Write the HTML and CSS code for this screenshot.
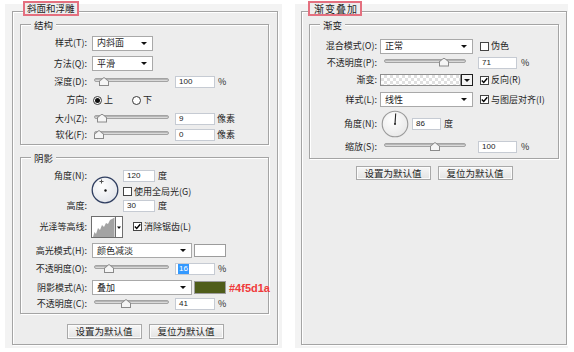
FILE: index.html
```html
<!DOCTYPE html>
<html lang="zh-CN">
<head>
<meta charset="utf-8">
<title>图层样式</title>
<link rel="stylesheet" href="styles.css">
</head>
<body>
<div class="page">
  <section class="panel panel-left">
    <div class="outer">
      <div class="tab">斜面和浮雕</div>

      <div class="grp grp-struct">
        <div class="grp-title">结构</div>
        <div class="row h22">
          <span class="lbl">样式(T):</span>
          <div class="select s61"><span>内斜面</span><i class="arrow"></i></div>
        </div>
        <div class="row h19">
          <span class="lbl">方法(Q):</span>
          <div class="select s61"><span>平滑</span><i class="arrow"></i></div>
        </div>
        <div class="row h18">
          <span class="lbl">深度(D):</span>
          <div class="slider"><span class="track"></span><span class="thumb" style="left:5px"></span></div>
          <span class="num w40">100</span><span class="unit">%</span>
        </div>
        <div class="row h18">
          <span class="lbl">方向:</span>
          <span class="radio on"></span><span class="rtext">上</span>
          <span class="radio r2"></span><span class="rtext">下</span>
        </div>
        <div class="row h19">
          <span class="lbl">大小(Z):</span>
          <div class="slider"><span class="track"></span><span class="thumb" style="left:3px"></span></div>
          <span class="num w40">9</span><span class="unit u2">像素</span>
        </div>
        <div class="row h14">
          <span class="lbl">软化(F):</span>
          <div class="slider"><span class="track"></span><span class="thumb" style="left:0px"></span></div>
          <span class="num w40">0</span><span class="unit u2">像素</span>
        </div>
      </div>

      <div class="grp grp-shadow">
        <div class="grp-title">阴影</div>
        <div class="angle">
          <span class="lbl ga1">角度(N):</span>
          <svg class="dial" width="28" height="28" viewBox="0 0 28 28">
            <defs><radialGradient id="dgl" cx="40%" cy="35%" r="75%"><stop offset="0" stop-color="#ffffff"/><stop offset="1" stop-color="#dfe2e8"/></radialGradient></defs>
            <circle cx="14" cy="14" r="12.8" fill="url(#dgl)" stroke="#2f3e60" stroke-width="1.3"/>
            <path d="M10.5 3.5v4M8.5 5.5h4" stroke="#555" stroke-width="1"/>
            <circle cx="14.5" cy="14.5" r="1.2" fill="#111"/>
          </svg>
          <div class="fld ga1"><span class="num w32">120</span><span class="unit">度</span></div>
          <div class="fld ga2"><span class="cb"></span><span class="cbt">使用全局光(G)</span></div>
          <span class="lbl ga3">高度:</span>
          <div class="fld ga3"><span class="num w32">30</span><span class="unit">度</span></div>
        </div>
        <div class="row h29">
          <span class="lbl">光泽等高线:</span>
          <svg class="contour" width="32" height="22" viewBox="0 0 32 22">
            <rect x="0.5" y="0.5" width="31" height="21" fill="#fff" stroke="#6e6e6e"/>
            <path d="M2 21 L3.5 16 L5 18 L7 12 L9 14 L11 9 L13 11 L15 7 L17 8 L19 4 L21 3 L23.5 1.5 L23.5 21 Z" fill="#a3a3a3"/>
            <line x1="24.5" y1="0.5" x2="24.5" y2="21.5" stroke="#6e6e6e"/>
            <path d="M26 10.5h4l-2 2.5z" fill="#111"/>
          </svg>
          <span class="cb cb-gap on"><svg width="7" height="7" viewBox="0 0 7 7"><path d="M0.8 3.6 L2.7 5.5 L6.3 1.2" fill="none" stroke="#000" stroke-width="1.4"/></svg></span><span class="cbt">消除锯齿(L)</span>
        </div>
        <div class="row h19">
          <span class="lbl">高光模式(H):</span>
          <div class="select s100"><span>颜色减淡</span><i class="arrow"></i></div>
          <span class="sw sw-white"></span>
        </div>
        <div class="row h18">
          <span class="lbl">不透明度(O):</span>
          <div class="slider"><span class="track"></span><span class="thumb" style="left:10px"></span></div>
          <span class="num w40"><span class="selected">16</span></span><span class="unit">%</span>
        </div>
        <div class="row h19">
          <span class="lbl">阴影模式(A):</span>
          <div class="select s100"><span>叠加</span><i class="arrow"></i></div>
          <span class="sw sw-olive"></span>
          <span class="hex">#4f5d1a</span>
        </div>
        <div class="row h14">
          <span class="lbl">不透明度(C):</span>
          <div class="slider"><span class="track"></span><span class="thumb" style="left:27px"></span></div>
          <span class="num w40">41</span><span class="unit">%</span>
        </div>
      </div>

      <div class="btns">
        <div class="btn">设置为默认值</div>
        <div class="btn">复位为默认值</div>
      </div>
    </div>
  </section>

  <section class="panel panel-right">
    <div class="outer">
      <div class="tab tab-right">渐变叠加</div>

      <div class="grp grp-grad">
        <div class="grp-title">渐变</div>
        <div class="row h20">
          <span class="lbl lr">混合模式(O):</span>
          <div class="select s93"><span>正常</span><i class="arrow"></i></div>
          <span class="cb cb-r"></span><span class="cbt">伪色</span>
        </div>
        <div class="row h13">
          <span class="lbl lr">不透明度(P):</span>
          <div class="slider sl-r"><span class="track"></span><span class="thumb" style="left:55px"></span></div>
          <span class="num w39">71</span><span class="unit u4">%</span>
        </div>
        <div class="row h22">
          <span class="lbl lr">渐变:</span>
          <div class="grad"><span class="grad-sw"></span><span class="grad-btn"><i class="arrow"></i></span></div>
          <span class="cb cb-r on"><svg width="7" height="7" viewBox="0 0 7 7"><path d="M0.8 3.6 L2.7 5.5 L6.3 1.2" fill="none" stroke="#000" stroke-width="1.4"/></svg></span><span class="cbt">反向(R)</span>
        </div>
        <div class="row h17">
          <span class="lbl lr">样式(L):</span>
          <div class="select s93"><span>线性</span><i class="arrow"></i></div>
          <span class="cb cb-r on"><svg width="7" height="7" viewBox="0 0 7 7"><path d="M0.8 3.6 L2.7 5.5 L6.3 1.2" fill="none" stroke="#000" stroke-width="1.4"/></svg></span><span class="cbt">与图层对齐(I)</span>
        </div>
        <div class="row h31">
          <span class="lbl lr">角度(N):</span>
          <svg class="dial dial-r" width="28" height="28" viewBox="0 0 28 28">
            <defs><radialGradient id="dgr" cx="40%" cy="35%" r="75%"><stop offset="0" stop-color="#ffffff"/><stop offset="1" stop-color="#e6e6e6"/></radialGradient></defs>
            <circle cx="14" cy="14" r="12.8" fill="url(#dgr)" stroke="#9a9a9a" stroke-width="1.1"/>
            <line x1="14" y1="14" x2="14.7" y2="3.5" stroke="#222" stroke-width="1.1"/>
            <circle cx="14" cy="14" r="1" fill="#222"/>
          </svg>
          <span class="num w29">86</span><span class="unit">度</span>
        </div>
        <div class="row h16">
          <span class="lbl lr">缩放(S):</span>
          <div class="slider sl-r"><span class="track"></span><span class="thumb" style="left:46px"></span></div>
          <span class="num w39">100</span><span class="unit u4">%</span>
        </div>
      </div>

      <div class="btns btns-r">
        <div class="btn">设置为默认值</div>
        <div class="btn">复位为默认值</div>
      </div>
    </div>
  </section>
</div>
</body>
</html>
```

FILE: styles.css
```css
* { box-sizing: border-box; margin: 0; padding: 0; }
html, body { background: #fff; }
body {
  font-family: "Noto Sans CJK SC", "Noto Sans", sans-serif;
  font-size: 9px;
  color: #1f1f1f;
}

.page { display: flex; gap: 13px; padding: 4px 0 0 5px; }

.panel { height: 344px; background: #f3f3f3; padding-top: 7px; padding-bottom: 3px; }
.panel-left { width: 277px; padding-left: 7px; padding-right: 4px; }
.panel-right { width: 273px; padding-left: 6px; padding-right: 1px; }

.outer {
  height: 100%;
  border: 1px solid #a4a4a4;
  box-shadow: inset 1px 1px 0 #fff, 1px 1px 0 #fff;
  background: #ededed;
  display: flex;
  flex-direction: column;
}

.tab {
  align-self: flex-start;
  margin: -11px 0 0 10px;
  height: 15px;
  border: 2px solid #e4707f;
  background: #ededed;
  padding: 0 2px;
  line-height: 11px;
  font-size: 9.5px;
  white-space: nowrap;
}
.tab-right { margin-left: 6px; font-size: 10px; letter-spacing: 1px; padding: 0 2px 0 4px; }

.grp {
  border: 1px solid #a4a4a4;
  box-shadow: inset 1px 1px 0 #fff, 1px 1px 0 #fff;
  margin: 8px 8px 0 7px;
}
.grp-struct { padding-bottom: 2px; }
.grp-shadow { margin-top: 12px; padding-bottom: 2px; }
.grp-grad { margin-right: 7px; padding-top: 0; padding-bottom: 3px; }
.grp-grad > .grp-title { margin-bottom: 4px; }

.grp-title {
  width: fit-content;
  margin: -7px 0 0 10px;
  padding: 0 3px;
  background: #ededed;
  height: 14px;
  line-height: 14px;
  font-size: 9.5px;
}

.row { display: flex; align-items: center; white-space: nowrap; }
.h13 { height: 13px; } .h14 { height: 14px; } .h16 { height: 16px; } .h17 { height: 17px; }
.h18 { height: 18px; } .h19 { height: 19px; } .h20 { height: 20px; } .h22 { height: 22px; }
.h29 { height: 29px; } .h31 { height: 31px; }

.lbl { width: 66px; flex: none; text-align: right; line-height: 12px; white-space: nowrap; }
.lbl.lr { width: 67px; }

.select {
  display: flex;
  align-items: center;
  height: 15px;
  margin-left: 5px;
  background: #fff;
  border: 1px solid #a9a9a9;
  padding-left: 4px;
  line-height: 12px;
  flex: none;
}
.s61 { width: 61px; } .s100 { width: 100px; } .s93 { width: 93px; margin-left: 3px; }
.arrow {
  display: block;
  margin-left: auto;
  margin-right: 5px;
  width: 0; height: 0;
  border-left: 3px solid transparent;
  border-right: 3px solid transparent;
  border-top: 3px solid #111;
}

.slider { position: relative; width: 75px; height: 10px; margin-left: 7px; flex: none; }
.slider.sl-r { width: 82px; }
.track {
  position: absolute; left: 0; right: 0; top: 1px; height: 4px;
  border: 1px solid #a3a3a3; border-radius: 2px;
  background: #d9d9d9; box-shadow: inset 0 1px 0 #b5b5b5;
}
.thumb {
  position: absolute; top: 0; width: 10px; height: 9px;
  background: #8a8a8a;
  clip-path: polygon(0 100%, 0 45%, 50% 0, 100% 45%, 100% 100%);
}
.thumb::after {
  content: ""; position: absolute; inset: 1px;
  background: #f5f5f5;
  clip-path: polygon(0 100%, 0 45%, 50% 0, 100% 45%, 100% 100%);
}

.num {
  display: flex; align-items: center;
  height: 12px; margin-left: 6px;
  background: #fff; border: 1px solid #c6cbd3;
  padding-left: 3px;
  font-family: "Liberation Sans", Arial, sans-serif; font-size: 8px; line-height: 10px;
  color: #1a1a1a; flex: none;
}
.w40 { width: 40px; } .w39 { width: 39px; margin-left: 12px; } .w32 { width: 32px; margin-left: 0; }
.w29 { width: 29px; margin-left: 3px; }
.selected { background: #3399ff; color: #fff; padding: 0 1px; margin-left: -1px; }
.unit { margin-left: 3px; line-height: 12px; }
.unit.u2 { margin-left: 2px; }
.unit.u4 { margin-left: 4px; }

.radio {
  width: 9px; height: 9px; margin-left: 6px;
  border: 1px solid #3a3a3a; border-radius: 50%; background: #fff;
  display: flex; align-items: center; justify-content: center; flex: none;
}
.radio.on::after { content: ""; width: 5px; height: 5px; border-radius: 50%; background: #111; }
.radio.r2 { margin-left: 19px; }
.rtext { margin-left: 2px; line-height: 12px; }

.cb {
  width: 9px; height: 9px; flex: none;
  border: 1px solid #444; background: #fff;
  display: flex; align-items: center; justify-content: center;
}
.cb-gap { margin-left: 10px; }
.cb-r { margin-left: 7px; }
.cbt { margin-left: 2px; line-height: 12px; }

.angle {
  display: grid;
  grid-template-columns: 66px 36px auto;
  grid-template-rows: 16px 15px 13px;
  margin-top: 3px;
}
.angle .lbl { align-self: center; }
.angle .dial { grid-column: 2; grid-row: 1 / 4; align-self: center; margin-left: 4px; }
.fld { display: flex; align-items: center; grid-column: 3; }
.ga1 { grid-row: 1; } .ga2 { grid-row: 2; } .ga3 { grid-row: 3; }
.lbl.ga1, .lbl.ga3 { grid-column: 1; }

.dial { display: block; flex: none; }
.dial-r { margin-left: 4px; }

.contour { display: block; margin-left: 4px; flex: none; }

.sw { width: 32px; height: 13px; margin-left: 2px; border: 1px solid #9c9c9c; flex: none; }
.sw-white { background: #fff; }
.sw-olive { background: #4f5d1a; }
.hex {
  margin-left: 3px;
  font-family: "Liberation Sans", Arial, sans-serif;
  font-weight: bold; font-size: 11px; color: #f03a3a;
}

.grad { display: flex; width: 93px; height: 12px; margin-left: 3px; flex: none; }
.grad-sw {
  flex: 1;
  border: 1px solid #8f8f8f;
  background: repeating-conic-gradient(#e0e0e0 0 25%, #fff 0 50%) 0 0 / 6px 6px;
}
.grad-btn {
  width: 12px; border: 1px solid #1e1e1e; background: #f3f3f3;
  display: flex; align-items: center;
}
.grad-btn .arrow { margin: 0 auto; }

.btns { display: flex; justify-content: center; gap: 7px; margin-top: 10px; }
.btns-r { margin-top: 7px; }
.btns-r .btn { height: 14px; line-height: 12px; }
.btn {
  width: 75px; height: 15px;
  border: 1px solid #a9a9a9;
  background: linear-gradient(#f7f7f7, #e3e3e3);
  box-shadow: inset 0 0 0 1px #fbfbfb;
  font-size: 9.5px; line-height: 13px; text-align: center;
}
```
